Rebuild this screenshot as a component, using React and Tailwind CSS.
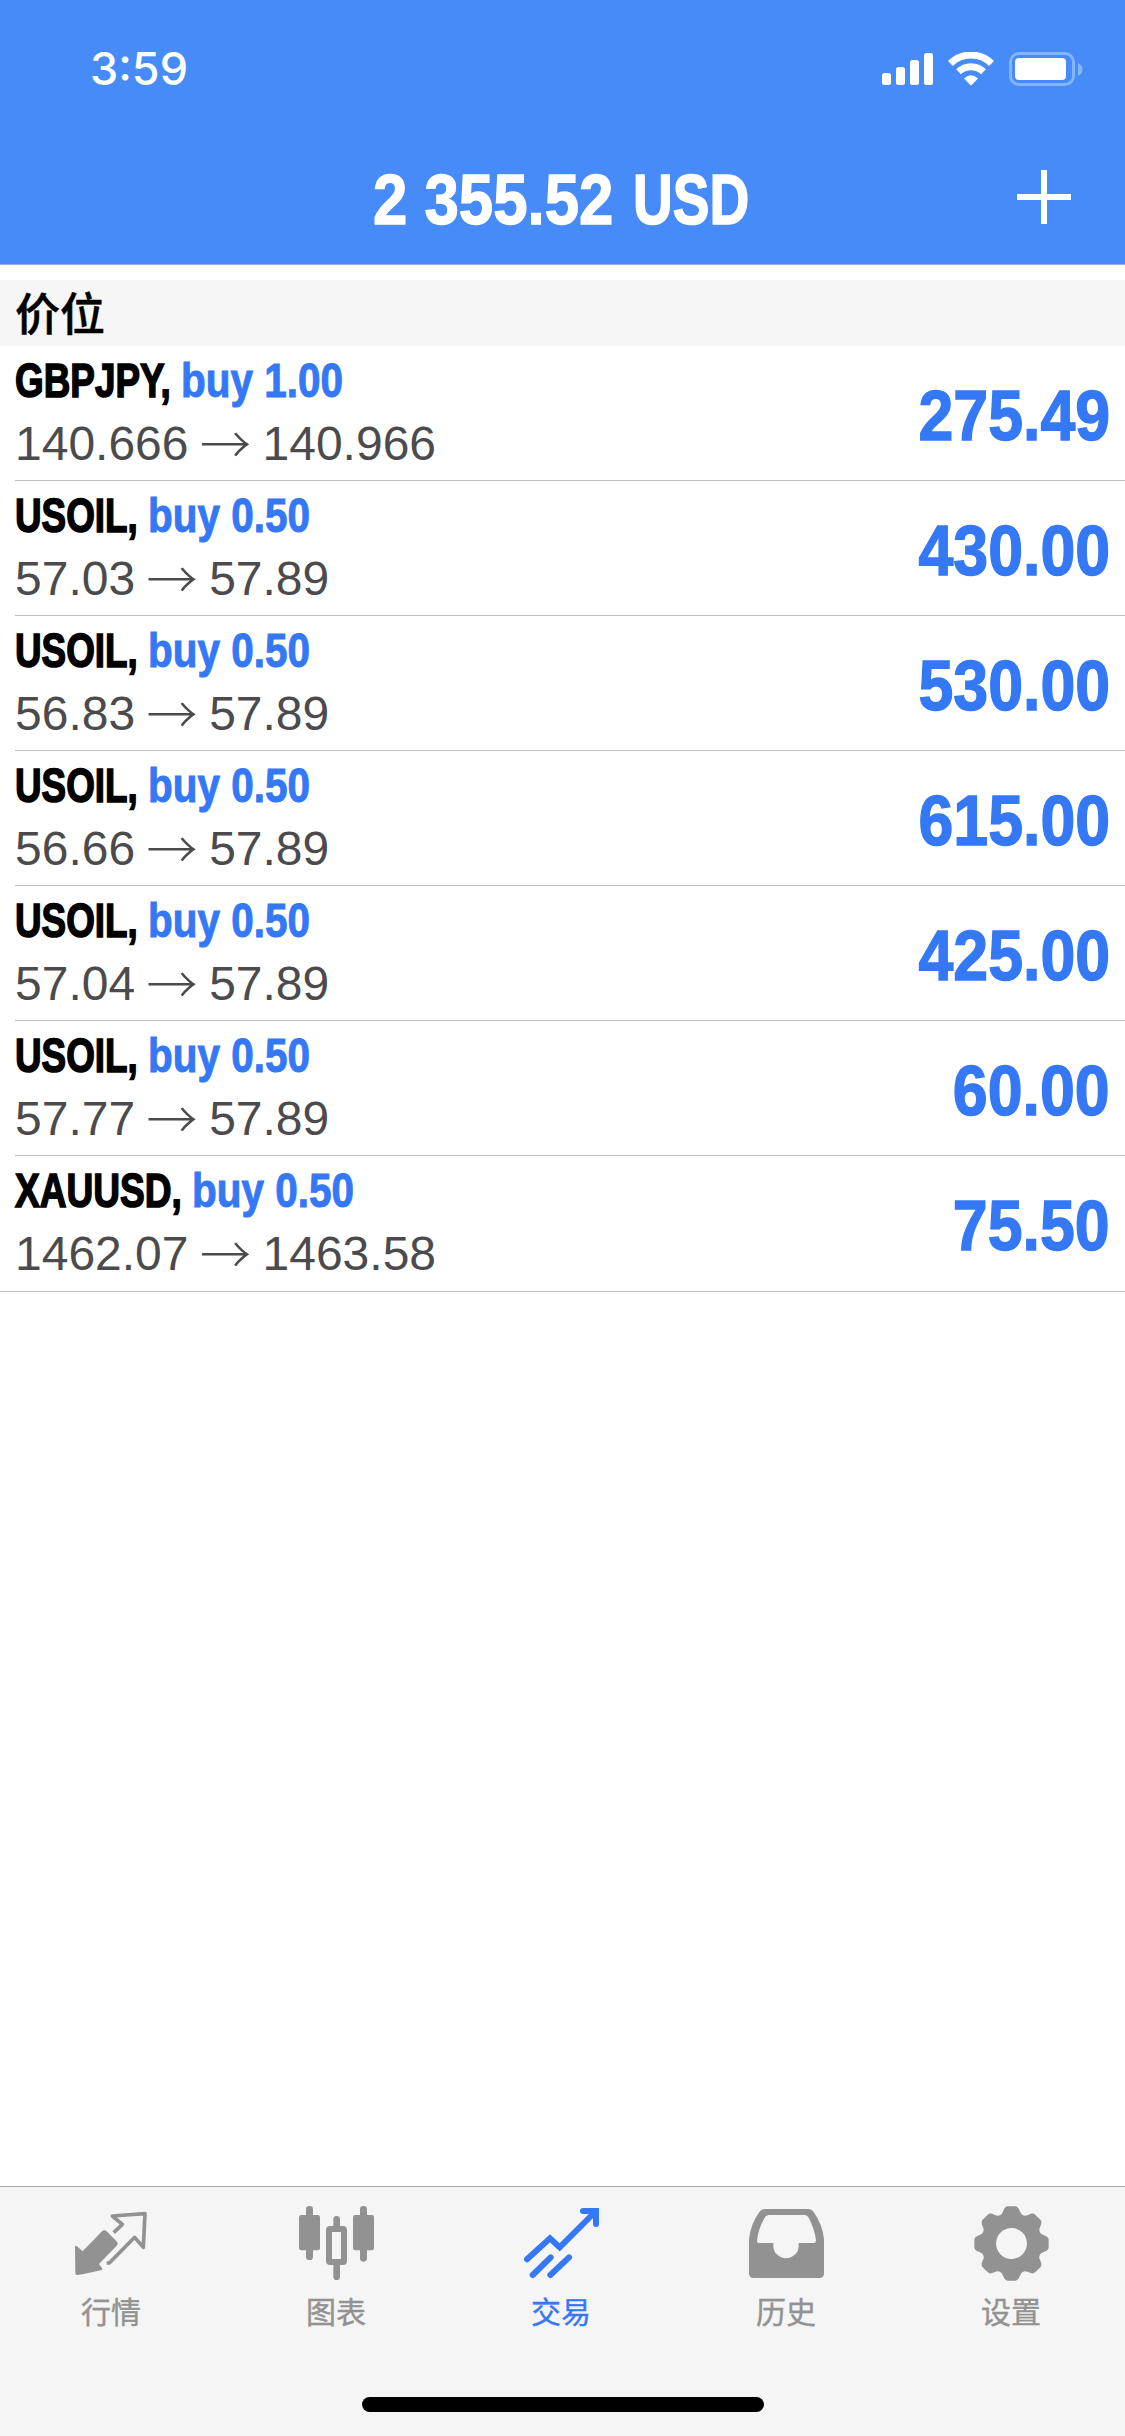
const POSITIONS = [
  { symbol: "GBPJPY", slot: "w-[166px]", scale: "scale-x-[0.768]", lots: "1.00", open: "140.666", now: "140.966", profit: "275.49" },
  { symbol: "USOIL", slot: "w-[133px]", scale: "scale-x-[0.767]", lots: "0.50", open: "57.03", now: "57.89", profit: "430.00" },
  { symbol: "USOIL", slot: "w-[133px]", scale: "scale-x-[0.767]", lots: "0.50", open: "56.83", now: "57.89", profit: "530.00" },
  { symbol: "USOIL", slot: "w-[133px]", scale: "scale-x-[0.767]", lots: "0.50", open: "56.66", now: "57.89", profit: "615.00" },
  { symbol: "USOIL", slot: "w-[133px]", scale: "scale-x-[0.767]", lots: "0.50", open: "57.04", now: "57.89", profit: "425.00" },
  { symbol: "USOIL", slot: "w-[133px]", scale: "scale-x-[0.767]", lots: "0.50", open: "57.77", now: "57.89", profit: "60.00" },
  { symbol: "XAUUSD", slot: "w-[177px]", scale: "scale-x-[0.772]", lots: "0.50", open: "1462.07", now: "1463.58", profit: "75.50" },
];

function StatusIcons() {
  return (
    <svg className="block h-[34px] w-[201px]" viewBox="882 52 201 34" fill="#fff">
      <rect x="882" y="73" width="9" height="12" rx="2.5" />
      <rect x="896" y="67" width="9" height="18" rx="2.5" />
      <rect x="910" y="60" width="9" height="25" rx="2.5" />
      <rect x="924" y="53" width="9" height="32" rx="2.5" />
      <g fill="none" stroke="#fff" strokeWidth="7">
        <path d="M950.5 63.5A29 29 0 0 1 991.5 63.5" />
        <path d="M958.5 71.8A18 18 0 0 1 983.5 71.8" />
      </g>
      <path d="M964 78.5Q971 72 978 78.5L971.7 85Q971 85.7 970.3 85Z" />
      <rect x="1010.5" y="53.5" width="63" height="31" rx="8.5" fill="none" stroke="#83b5fa" strokeWidth="3" />
      <rect x="1015" y="58" width="51" height="22" rx="4" />
      <path d="M1078 63Q1082.5 65 1082.5 69.5T1078 76Z" fill="#83b5fa" />
    </svg>
  );
}

function QuotesIcon() {
  return (
    <svg className="block size-[75px]" viewBox="0 0 225 225" fill="currentColor">
      <path d="M3 123Q3 117 9 121L26 136L84 76Q91 69 98 76L129 107Q134 112 128 119L75 174L84 186Q87 191 80 193Q40 203 10 207Q4 208 4 200Z" />
      <path d="M119 80L145 55L115 30L213 23L208 124L182 94L106 171H98" fill="none" stroke="currentColor" strokeWidth="11" strokeLinejoin="round" />
    </svg>
  );
}

function ChartIcon() {
  return (
    <svg className="block size-[75px]" viewBox="0 0 225 225" fill="currentColor">
      <rect x="0" y="27" width="63" height="106" rx="7" />
      <rect x="21" y="0" width="21" height="162" rx="10" />
      <rect x="103" y="30" width="20" height="40" rx="10" />
      <rect x="103" y="170" width="20" height="52" rx="10" />
      <rect x="90" y="69" width="45" height="99" rx="3" fill="none" stroke="currentColor" strokeWidth="18" />
      <rect x="162" y="27" width="63" height="106" rx="7" />
      <rect x="183" y="0" width="21" height="167" rx="10" />
    </svg>
  );
}

function TradeIcon() {
  return (
    <svg className="block size-[75px]" viewBox="0 0 225 225" fill="none" stroke="currentColor" strokeWidth="18" strokeLinecap="round">
      <path d="M9 160L78 97L107 124L213 18" />
      <path d="M177 15H216V54" />
      <path d="M26 207L80 154M79 207L135 154" />
    </svg>
  );
}

function HistoryIcon() {
  return (
    <svg className="block size-[75px]" viewBox="0 0 225 225" fill="currentColor">
      <path
        fillRule="evenodd"
        d="M0 100Q4 56 31 18Q37 9 48 9H177Q188 9 194 18Q221 56 225 100V202Q225 216 211 216H14Q0 216 0 202ZM60 27Q51 27 47 35Q28 68 24 104Q24 111 30 111H73V119A38 38 0 0 0 149 119V111H195Q201 111 201 104Q197 68 179 35Q175 27 167 27Z"
      />
    </svg>
  );
}

function SettingsIcon() {
  return (
    <svg className="block size-[75px]" viewBox="-113 -113 226 226" fill="currentColor">
      <circle r="67" fill="none" stroke="currentColor" strokeWidth="41" />
      {[0, 45, 90, 135, 180, 225, 270, 315].map((angle) => (
        <path
          key={angle}
          transform={`rotate(${angle})`}
          d="M-30 -72L-36 -84Q-28 -87 -25 -98Q-20 -112 -11 -112H11Q20 -112 25 -98Q28 -87 36 -84L30 -72Z"
        />
      ))}
    </svg>
  );
}

const TABS = [
  { label: "行情", Icon: QuotesIcon },
  { label: "图表", Icon: ChartIcon },
  { label: "交易", Icon: TradeIcon, active: true },
  { label: "历史", Icon: HistoryIcon },
  { label: "设置", Icon: SettingsIcon },
];

function PositionRow({ item, last }) {
  return (
    <li className={last ? "border-b border-[#c0c0c2]" : "pl-[15px]"}>
      <div className={last ? "flex h-[135px] justify-between pr-[15px] pl-[15px]" : "flex h-[135px] justify-between border-b border-[#c0c0c2] pr-[15px]"}>
        <div className="pt-[7px]">
          <div className="flex h-[56px] text-[48px] leading-[56px] font-bold whitespace-nowrap">
            <div className={item.slot}>
              <span className={`inline-block origin-left [-webkit-text-stroke:1.6px_black] ${item.scale}`}>{item.symbol},</span>
            </div>
            <span className="inline-block origin-left scale-x-[0.843] text-[#3478f6] [-webkit-text-stroke:1px_#3478f6]">buy {item.lots}</span>
          </div>
          <div className="flex h-[64px] text-[48px] leading-[70px] whitespace-nowrap text-[#4b4b4d]">
            <span>{item.open}</span>
            <span className="w-[74px] text-center">
              <span className="-mx-[10px] inline-block font-['Noto_Sans_CJK_SC'] text-[51px] leading-[66px] font-light">→</span>
            </span>
            <span>{item.now}</span>
          </div>
        </div>
        <span className="inline-block origin-right scale-x-[0.883] pt-[30px] text-[71px] leading-[80px] font-bold text-[#3478f6] [-webkit-text-stroke:1.4px_#3478f6]">
          {item.profit}
        </span>
      </div>
    </li>
  );
}

export default function App() {
  return (
    <div className="flex h-[2436px] w-[1125px] flex-col overflow-hidden bg-white font-['Liberation_Sans','Noto_Sans_CJK_SC',sans-serif]">
      <header className="h-[265px] border-b border-[#8fb2dd] bg-[#468bf7] text-white">
        <div className="flex h-[132px] items-start justify-between pt-[52px] pr-[42px] pl-[90px]">
          <span className="mt-[-11px] font-['Inter'] text-[45px] leading-[56px] font-medium">3:59</span>
          <StatusIcons />
        </div>
        <div className="flex h-[132px] items-start justify-between pr-[54px] pl-[373px]">
          <h1 className="flex h-[132px] pt-[28px] text-[71px] leading-[80px] font-bold whitespace-pre">
            <span className="w-[260px]">
              <span className="inline-block origin-left scale-x-[0.87] [-webkit-text-stroke:1.4px_white]">2 355.52</span>
            </span>
            <span className="inline-block w-[117px]">
              <span className="inline-block origin-left scale-x-[0.775] [-webkit-text-stroke:1.6px_white]">USD</span>
            </span>
          </h1>
          <svg className="mt-[38px] block h-[54px] w-[54px]" viewBox="0 0 54 54" fill="#fff">
            <path d="M24 0H30V24H54V30H30V54H24V30H0V24H24Z" />
          </svg>
        </div>
      </header>

      <main className="flex-1 pt-[15px]">
        <h2 className="h-[66px] bg-[#f6f6f6] pl-[15px] font-['Noto_Sans_CJK_SC'] text-[45px] leading-[64px] font-medium text-black [-webkit-text-stroke:0.5px_black]">价位</h2>
        <ul>
          {POSITIONS.map((item, i) => (
            <PositionRow key={i} item={item} last={i === POSITIONS.length - 1} />
          ))}
        </ul>
      </main>

      <footer className="flex h-[250px] flex-col items-center border-t border-[#a9a9ab] bg-[#f5f5f5]">
        <nav className="-ml-[2px] grid w-[1125px] grid-cols-5 pt-[19px]">
          {TABS.map(({ label, Icon, active }) => (
            <div key={label} className={active ? "flex flex-col items-center text-[#3478f6]" : "flex flex-col items-center text-[#929292]"}>
              <Icon />
              <span className="mt-[7px] mb-[2px] pr-[1px] font-['Noto_Sans_CJK_SC'] text-[30px] leading-[44px] [-webkit-text-stroke:0.4px_currentColor]">{label}</span>
            </div>
          ))}
        </nav>
        <div className="mt-[63px] h-[15px] w-[402px] rounded-full bg-black" />
      </footer>
    </div>
  );
}
